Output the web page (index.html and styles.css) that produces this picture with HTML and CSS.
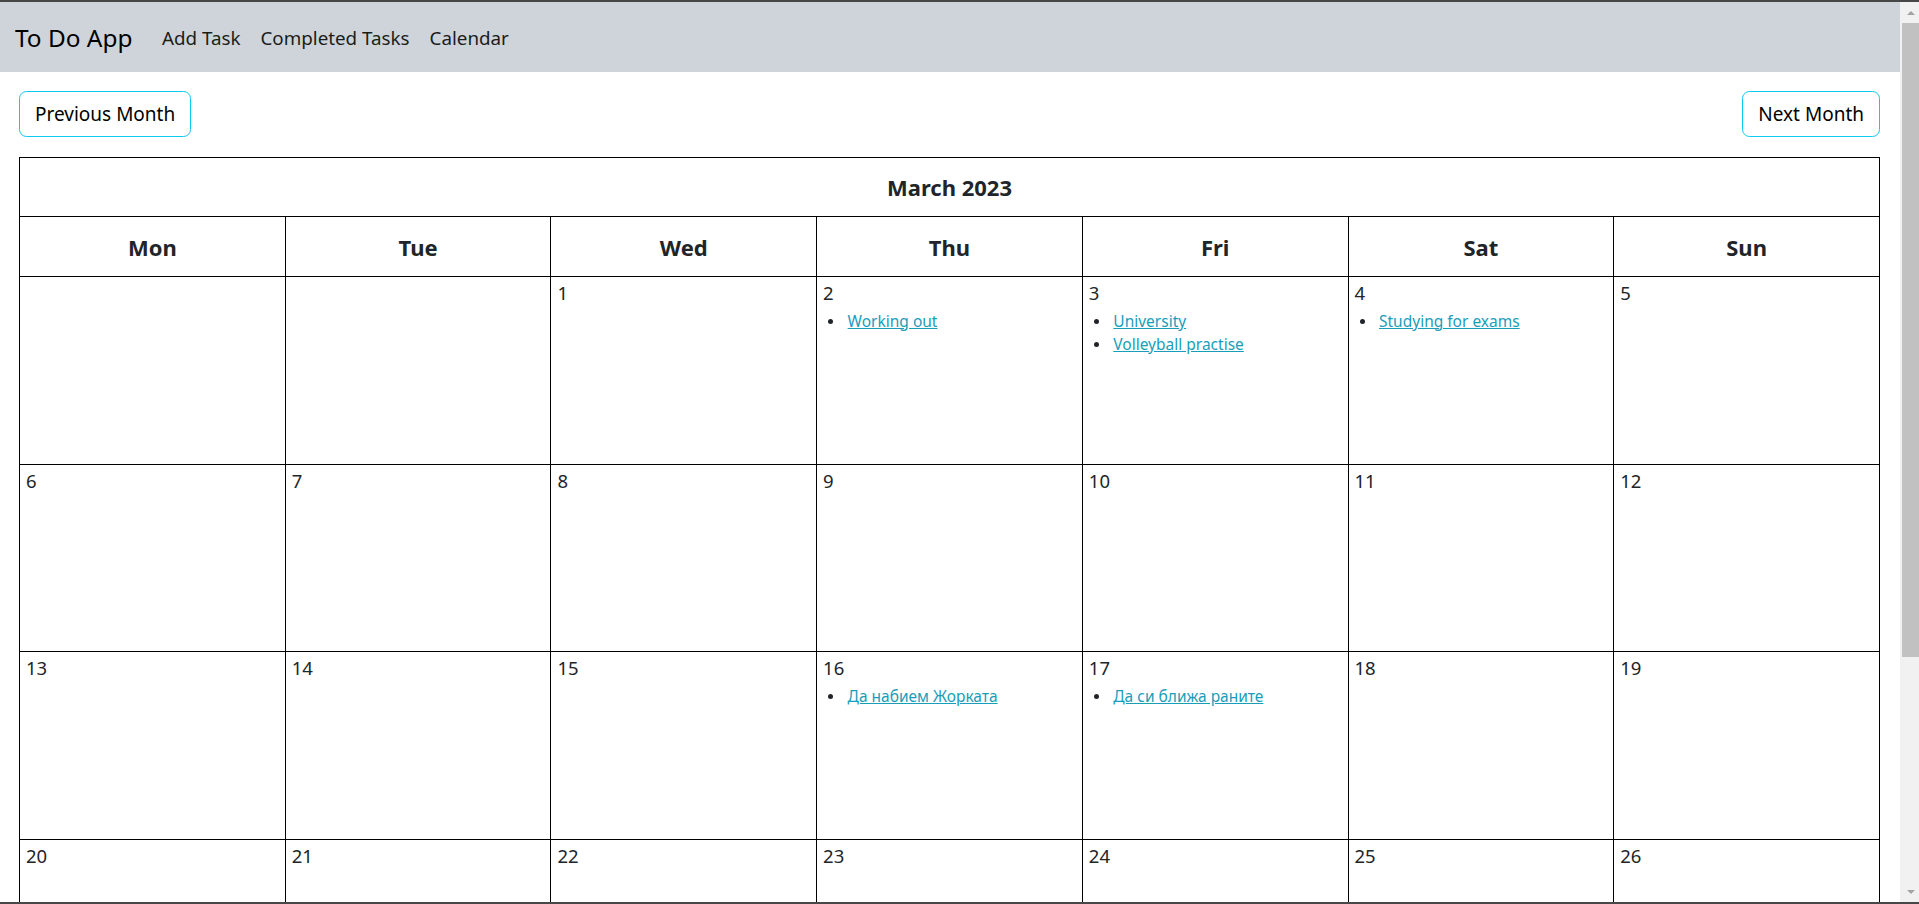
FILE: index.html
```html
<!DOCTYPE html>
<html lang="en">
<head>
<meta charset="utf-8">
<title>To Do App - Calendar</title>
<link rel="stylesheet" href="styles.css">
</head>
<body>
<div class="page">
  <nav class="navbar">
    <a class="brand" href="#">To Do App</a>
    <a class="nav-link" href="#">Add Task</a>
    <a class="nav-link" href="#">Completed Tasks</a>
    <a class="nav-link" href="#">Calendar</a>
  </nav>
  <main class="content">
    <div class="month-nav">
      <button class="btn">Previous Month</button>
      <button class="btn">Next Month</button>
    </div>
    <table class="calendar">
      <thead>
        <tr class="title-row"><th colspan="7">March 2023</th></tr>
        <tr class="days-row"><th>Mon</th><th>Tue</th><th>Wed</th><th>Thu</th><th>Fri</th><th>Sat</th><th>Sun</th></tr>
      </thead>
      <tbody>
        <tr>
          <td></td>
          <td></td>
          <td><div class="num">1</div></td>
          <td><div class="num">2</div><ul class="tasks"><li><a href="#">Working out</a></li></ul></td>
          <td><div class="num">3</div><ul class="tasks"><li><a href="#">University</a></li><li><a href="#">Volleyball practise</a></li></ul></td>
          <td><div class="num">4</div><ul class="tasks"><li><a href="#">Studying for exams</a></li></ul></td>
          <td><div class="num">5</div></td>
        </tr>
        <tr>
          <td><div class="num">6</div></td>
          <td><div class="num">7</div></td>
          <td><div class="num">8</div></td>
          <td><div class="num">9</div></td>
          <td><div class="num">10</div></td>
          <td><div class="num">11</div></td>
          <td><div class="num">12</div></td>
        </tr>
        <tr>
          <td><div class="num">13</div></td>
          <td><div class="num">14</div></td>
          <td><div class="num">15</div></td>
          <td><div class="num">16</div><ul class="tasks"><li><a href="#">Да набием Жорката</a></li></ul></td>
          <td><div class="num">17</div><ul class="tasks"><li><a href="#">Да си ближа раните</a></li></ul></td>
          <td><div class="num">18</div></td>
          <td><div class="num">19</div></td>
        </tr>
        <tr>
          <td><div class="num">20</div></td>
          <td><div class="num">21</div></td>
          <td><div class="num">22</div></td>
          <td><div class="num">23</div></td>
          <td><div class="num">24</div></td>
          <td><div class="num">25</div></td>
          <td><div class="num">26</div></td>
        </tr>
        <tr>
          <td><div class="num">27</div></td>
          <td><div class="num">28</div></td>
          <td><div class="num">29</div></td>
          <td><div class="num">30</div></td>
          <td><div class="num">31</div></td>
          <td></td>
          <td></td>
        </tr>
      </tbody>
    </table>
  </main>
</div>
<div class="scrollbar">
  <div class="arrow arrow-up"><span class="tri tri-up"></span></div>
  <div class="thumb"></div>
  <div class="track-rest"></div>
  <div class="arrow arrow-down"><span class="tri tri-down"></span></div>
</div>
<div class="frame-bottom"></div>
</body>
</html>
```

FILE: styles.css
```css
html {
  overflow: hidden;
}

body {
  margin: 0;
  font-family: "Noto Sans", "Open Sans", sans-serif;
  color: #212529;
  background: #fff;
  border-top: 2px solid #474747;
}

.page {
  margin-right: 19px;
}

.navbar {
  height: 70px;
  box-sizing: border-box;
  padding: 2px 15px 0;
  background: #ced4da;
  display: flex;
  align-items: center;
}

.brand {
  font-size: 24.4px;
  line-height: 37.5px;
  color: #000;
  text-decoration: none;
  margin-right: 19.5px;
}

.nav-link {
  font-size: 18.8px;
  line-height: 30px;
  padding: 0 10px;
  color: #1c1c1c;
  text-decoration: none;
}

.content {
  padding: 19px 20px 0 19px;
}

.month-nav {
  display: flex;
  justify-content: space-between;
  margin-bottom: 20px;
}

.btn {
  font-family: inherit;
  font-size: 19px;
  line-height: 30px;
  padding: 7px 15px;
  border: 1px solid #0dcaf0;
  border-radius: 7.5px;
  background: #fff;
  color: #000;
  cursor: pointer;
}

.calendar {
  width: 100%;
  border-collapse: collapse;
  table-layout: fixed;
}

.calendar th,
.calendar td {
  border: 1px solid #000;
  box-sizing: border-box;
}

.calendar th {
  font-size: 22px;
  font-weight: 700;
  text-align: center;
  vertical-align: middle;
  padding: 0;
  color: #212529;
}

.title-row th {
  height: 59.3px;
}

.days-row th {
  height: 60px;
}

.calendar td {
  height: 187.5px;
  vertical-align: top;
  padding: 2px 6px;
}

.num {
  font-size: 18.5px;
  line-height: 28px;
}

.tasks {
  list-style: none;
  margin: 2.5px 0 0;
  padding-left: 5px;
  font-size: 15.5px;
  line-height: 1.5;
}

.tasks li {
  display: flex;
  align-items: center;
}

.tasks li::before {
  content: "";
  width: 5px;
  height: 5px;
  border-radius: 50%;
  background: #212529;
  margin-right: 14.5px;
  flex: none;
}

.tasks a {
  color: #1a9db9;
  text-decoration: underline;
}

.scrollbar {
  position: fixed;
  top: 2px;
  right: 0;
  bottom: 2px;
  width: 19px;
  background: #f1f1f1;
  display: flex;
  flex-direction: column;
}

.arrow {
  height: 21px;
  display: flex;
  align-items: center;
  justify-content: center;
  padding-left: 2px;
}

.tri {
  width: 0;
  height: 0;
  border-left: 4.5px solid transparent;
  border-right: 4.5px solid transparent;
}

.tri-up {
  border-bottom: 4.5px solid #a3a3a3;
}

.tri-down {
  border-top: 4.5px solid #a3a3a3;
}

.thumb {
  height: 634px;
  margin-left: 2px;
  width: 17px;
  background: #c1c1c1;
}

.track-rest {
  flex: 1;
}

.frame-bottom {
  position: fixed;
  left: 0;
  right: 0;
  bottom: 0;
  height: 2px;
  background: #474747;
}
```
